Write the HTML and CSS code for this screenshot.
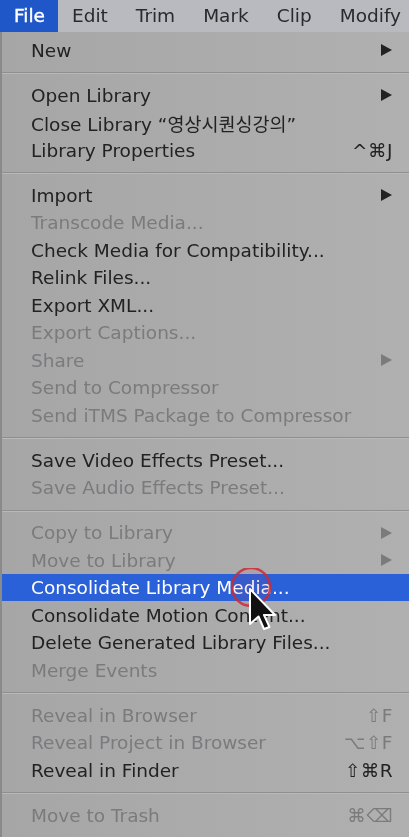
FILE: index.html
```html
<!DOCTYPE html>
<html>
<head>
<meta charset="utf-8">
<link rel="stylesheet" href="styles.css">
</head>
<body>
<div class="screen">
  <div class="menubar">
    <span class="mb-item active">File</span>
    <span class="mb-item">Edit</span>
    <span class="mb-item">Trim</span>
    <span class="mb-item">Mark</span>
    <span class="mb-item">Clip</span>
    <span class="mb-item">Modify</span>
  </div>
  <div class="menu">
    <div class="row"><span>New</span><svg class="arr" viewBox="0 0 11 12"><path d="M0 0L11 6L0 12Z"/></svg></div>
    <div class="sep"></div>
    <div class="row"><span>Open Library</span><svg class="arr" viewBox="0 0 11 12"><path d="M0 0L11 6L0 12Z"/></svg></div>
    <div class="row"><span>Close Library “영상시퀀싱강의”</span></div>
    <div class="row"><span>Library Properties</span><span class="key">^⌘J</span></div>
    <div class="sep"></div>
    <div class="row"><span>Import</span><svg class="arr" viewBox="0 0 11 12"><path d="M0 0L11 6L0 12Z"/></svg></div>
    <div class="row dis"><span>Transcode Media...</span></div>
    <div class="row"><span>Check Media for Compatibility...</span></div>
    <div class="row"><span>Relink Files...</span></div>
    <div class="row"><span>Export XML...</span></div>
    <div class="row dis"><span>Export Captions...</span></div>
    <div class="row dis"><span>Share</span><svg class="arr" viewBox="0 0 11 12"><path d="M0 0L11 6L0 12Z"/></svg></div>
    <div class="row dis"><span>Send to Compressor</span></div>
    <div class="row dis"><span>Send iTMS Package to Compressor</span></div>
    <div class="sep"></div>
    <div class="row"><span>Save Video Effects Preset...</span></div>
    <div class="row dis"><span>Save Audio Effects Preset...</span></div>
    <div class="sep"></div>
    <div class="row dis"><span>Copy to Library</span><svg class="arr" viewBox="0 0 11 12"><path d="M0 0L11 6L0 12Z"/></svg></div>
    <div class="row dis"><span>Move to Library</span><svg class="arr" viewBox="0 0 11 12"><path d="M0 0L11 6L0 12Z"/></svg></div>
    <div class="row sel"><span>Consolidate Library Media...</span></div>
    <div class="row"><span>Consolidate Motion Content...</span></div>
    <div class="row"><span>Delete Generated Library Files...</span></div>
    <div class="row dis"><span>Merge Events</span></div>
    <div class="sep"></div>
    <div class="row dis"><span>Reveal in Browser</span><span class="key">⇧F</span></div>
    <div class="row dis"><span>Reveal Project in Browser</span><span class="key">⌥⇧F</span></div>
    <div class="row"><span>Reveal in Finder</span><span class="key">⇧⌘R</span></div>
    <div class="sep"></div>
    <div class="row dis"><span>Move to Trash</span><span class="key">⌘⌫</span></div>
  </div>
  <svg class="cursor" width="60" height="70" viewBox="0 0 60 70">
    <circle cx="21" cy="19" r="19" fill="rgba(220,40,50,0.08)" stroke="#cc2a34" stroke-width="2.5" stroke-opacity="0.85"/>
    <path d="M20 21L20 56L28.5 48.5L34 61L39.5 59L34 47L45 47Z" fill="#111" stroke="#fff" stroke-width="2" stroke-linejoin="round"/>
  </svg>
</div>
</body>
</html>
```

FILE: styles.css
```css
html, body {
  margin: 0;
  padding: 0;
  background: #a9a9aa;
}
.screen {
  position: relative;
  width: 409px;
  height: 837px;
  overflow: hidden;
  font-family: "DejaVu Sans", "Noto Sans CJK KR", sans-serif;
  font-size: 18.5px;
  filter: blur(0.35px);
}
.menubar {
  height: 32px;
  display: flex;
  align-items: stretch;
  background: #b8bac0;
  color: #2a2a2c;
}
.mb-item {
  display: flex;
  align-items: center;
  padding: 0 14px 1px;
}
.mb-item.active {
  background: #1f57c9;
  color: #fff;
  -webkit-text-stroke: 0.4px #fff;
  padding: 0 13px 1px 14px;
}
.menu {
  height: 805px;
  box-sizing: border-box;
  padding-top: 4.25px;
  border-left: 2px solid #8a8a8b;
  background: linear-gradient(90deg, #a6a6a7 0%, #ababac 50%, #b0b0b1 100%);
  color: #222;
}
.row {
  height: 27.5px;
  display: flex;
  align-items: center;
  justify-content: space-between;
  padding: 0 16px 0 29px;
  white-space: nowrap;
}
.row.dis {
  color: #7b7b7d;
}
.row.sel {
  background: #2a60d8;
  color: #fff;
}
.arr {
  width: 11px;
  height: 12px;
  fill: currentColor;
  margin-right: 1px;
}
.key {
  letter-spacing: 0.5px;
}
.sep {
  height: 17.5px;
  display: flex;
  align-items: center;
}
.sep::before {
  content: "";
  flex: 1;
  height: 1px;
  background: #8f8f90;
  box-shadow: 0 1px 0 #b9b9ba;
}
.cursor {
  position: absolute;
  left: 230px;
  top: 568px;
}
```
